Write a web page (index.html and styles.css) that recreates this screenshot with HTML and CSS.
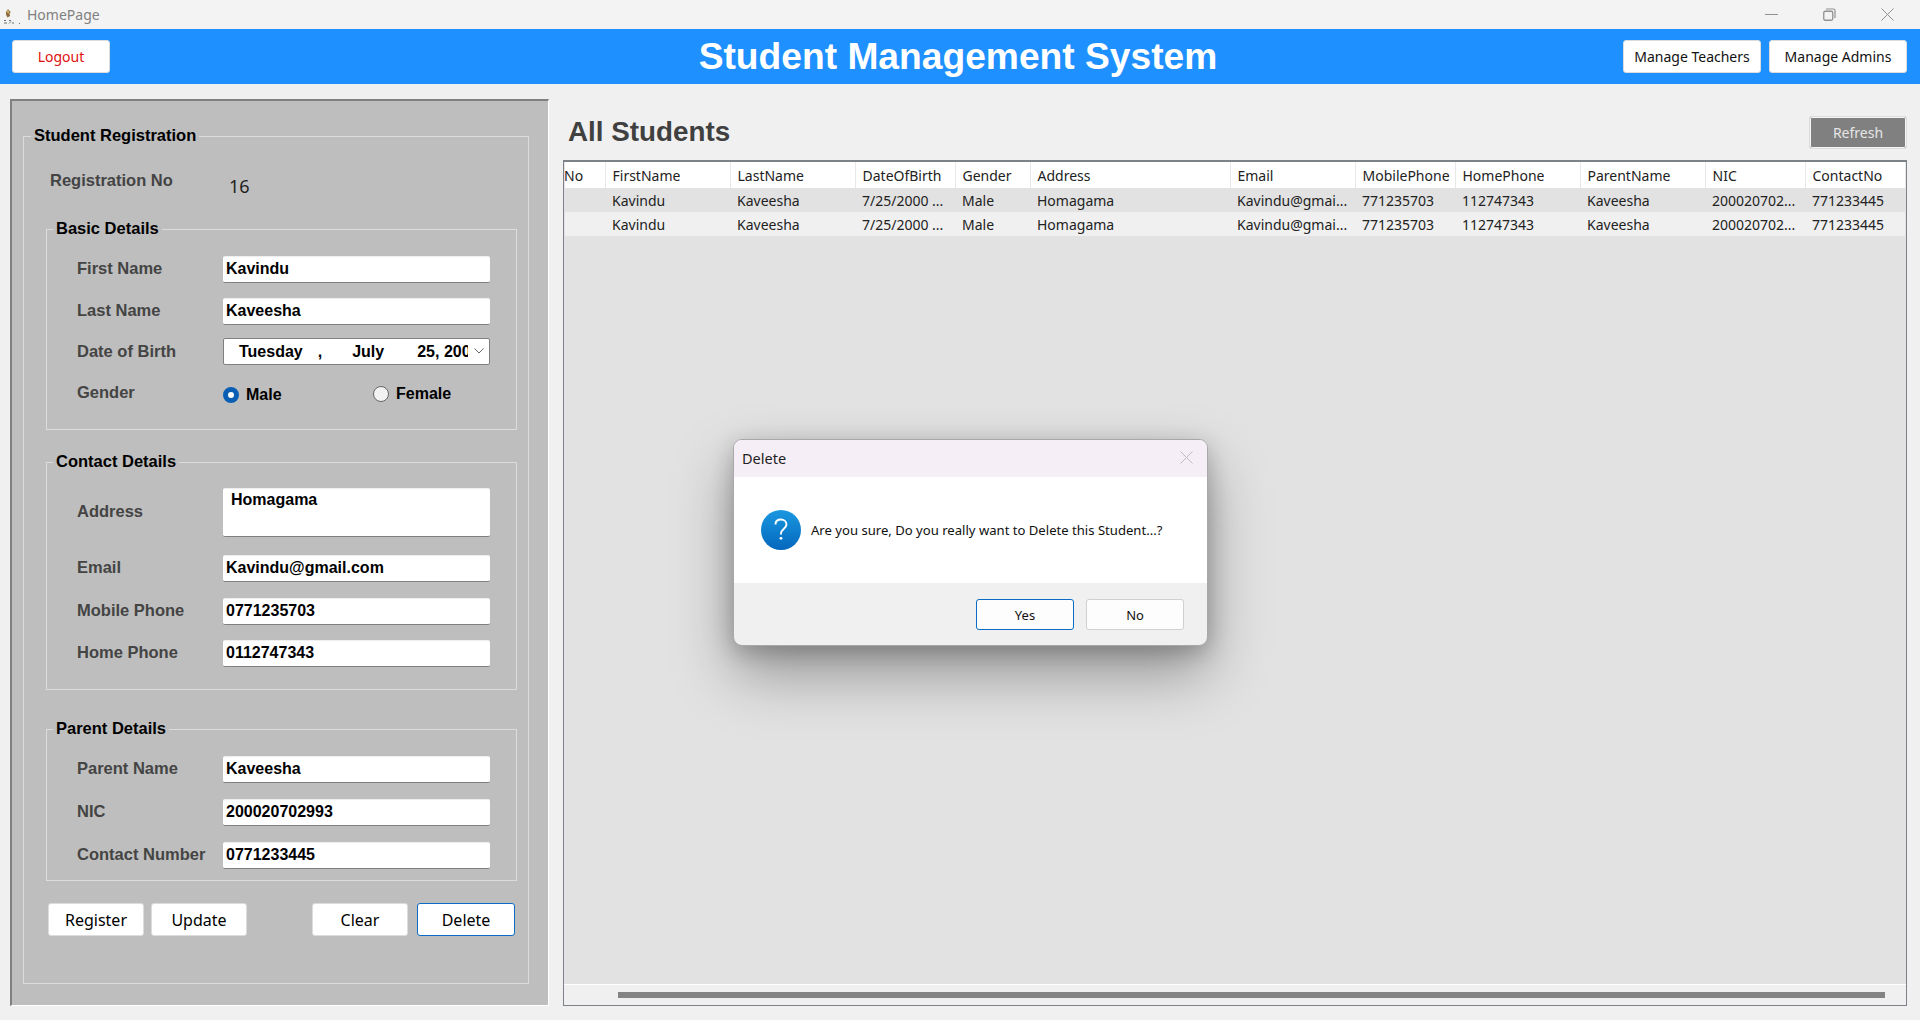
FILE: index.html
```html
<!DOCTYPE html>
<html lang="en">
<head>
    <meta charset="UTF-8">
    <meta name="viewport" content="width=device-width, initial-scale=1.0">
    <title>HomePage</title>
    <link rel="stylesheet" href="styles.css">
</head>
<body>

    <div class="titlebar">
        <svg class="app-icon" width="20" height="20" viewBox="0 0 20 20">
            <path d="M5 7l2-3 1.500 2 1.500 1-1.500 1 .5 3-2.500 1.500-1.500-3z" fill="#8a6a3a"/>
            <path d="M6 6l1-1 1 2-1 2z" fill="#e8c878"/>
            <path d="M3 15.500h2M3 18h3M8 15.500h2M8 18.500l2-2M11 18h2M18 18.500h1" stroke="#6f6f6f" stroke-width="1"/>
        </svg>
        <span class="app-name">HomePage</span>
        <div class="win-controls">
            <svg width="13" height="13" viewBox="0 0 13 13"><path d="M0 6.500h13" stroke="#919191"/></svg>
            <svg width="13" height="13" viewBox="0 0 13 13"><rect x="0.750" y="3.250" width="9" height="9" rx="1.500" fill="none" stroke="#919191" stroke-width="1.300"/><path d="M3 1h7.500a1.500 1.500 0 0 1 1.500 1.500V10" fill="none" stroke="#919191" stroke-width="1.200"/></svg>
            <svg width="13" height="13" viewBox="0 0 13 13"><path d="M0.500 0.500l12 12M12.500 0.500l-12 12" stroke="#919191"/></svg>
        </div>
    </div>

    <header class="topbar">
        <div class="topbar-left"><button class="top-btn logout" type="button">Logout</button></div>
        <h1 class="app-title">Student Management System</h1>
        <div class="topbar-right">
            <button class="top-btn" type="button">Manage Teachers</button>
            <button class="top-btn" type="button">Manage Admins</button>
        </div>
    </header>

    <main class="content">
        <section class="left-panel">
            <fieldset class="group outer">
                <legend>Student Registration</legend>

                <div class="reg-row">
                    <span class="field-label">Registration No</span>
                    <span class="reg-value">16</span>
                </div>

                <fieldset class="group basic">
                    <legend>Basic Details</legend>
                    <div class="row"><label class="field-label">First Name</label><div class="input">Kavindu</div></div>
                    <div class="row"><label class="field-label">Last Name</label><div class="input">Kaveesha</div></div>
                    <div class="row date-row">
                        <label class="field-label">Date of Birth</label>
                        <div class="input date">
                            <span class="date-day">Tuesday</span>
                            <span class="date-comma">,</span>
                            <span class="date-month">July</span>
                            <span class="date-year">25, 2000</span>
                            <svg class="chevron" width="10" height="6" viewBox="0 0 10 6"><path d="M0.500 0.500L5 5l4.500-4.500" fill="none" stroke="#666"/></svg>
                        </div>
                    </div>
                    <div class="row">
                        <label class="field-label">Gender</label>
                        <div class="radio-group">
                            <span class="radio-item male"><span class="radio checked"></span>Male</span>
                            <span class="radio-item"><span class="radio"></span>Female</span>
                        </div>
                    </div>
                </fieldset>

                <fieldset class="group contact">
                    <legend>Contact Details</legend>
                    <div class="row address-row"><label class="field-label">Address</label><div class="input textarea">Homagama</div></div>
                    <div class="row"><label class="field-label">Email</label><div class="input">Kavindu@gmail.com</div></div>
                    <div class="row"><label class="field-label">Mobile Phone</label><div class="input">0771235703</div></div>
                    <div class="row"><label class="field-label">Home Phone</label><div class="input">0112747343</div></div>
                </fieldset>

                <fieldset class="group parent">
                    <legend>Parent Details</legend>
                    <div class="row"><label class="field-label">Parent Name</label><div class="input">Kaveesha</div></div>
                    <div class="row"><label class="field-label">NIC</label><div class="input">200020702993</div></div>
                    <div class="row"><label class="field-label">Contact Number</label><div class="input">0771233445</div></div>
                </fieldset>

                <div class="form-buttons">
                    <button class="form-btn" type="button">Register</button>
                    <button class="form-btn" type="button">Update</button>
                    <button class="form-btn clear" type="button">Clear</button>
                    <button class="form-btn focused" type="button">Delete</button>
                </div>
            </fieldset>
        </section>

        <section class="right-panel">
            <div class="right-head">
                <h2>All Students</h2>
                <button class="refresh" type="button">Refresh</button>
            </div>
            <div class="grid-wrap">
                <div class="grid-body">
                    <table class="grid">
                        <colgroup>
                            <col class="w40"><col class="w125"><col class="w125"><col class="w100"><col class="w75"><col class="w200">
                            <col class="w125"><col class="w100"><col class="w125"><col class="w125"><col class="w100"><col class="w100">
                        </colgroup>
                        <thead>
                            <tr>
                                <th class="no-col">No</th><th>FirstName</th><th>LastName</th><th>DateOfBirth</th><th>Gender</th><th>Address</th>
                                <th>Email</th><th>MobilePhone</th><th>HomePhone</th><th>ParentName</th><th>NIC</th><th>ContactNo</th>
                            </tr>
                        </thead>
                        <tbody>
                            <tr class="odd">
                                <td></td><td>Kavindu</td><td>Kaveesha</td><td>7/25/2000 ...</td><td>Male</td><td>Homagama</td>
                                <td>Kavindu@gmai...</td><td>771235703</td><td>112747343</td><td>Kaveesha</td><td>200020702...</td><td>771233445</td>
                            </tr>
                            <tr>
                                <td></td><td>Kavindu</td><td>Kaveesha</td><td>7/25/2000 ...</td><td>Male</td><td>Homagama</td>
                                <td>Kavindu@gmai...</td><td>771235703</td><td>112747343</td><td>Kaveesha</td><td>200020702...</td><td>771233445</td>
                            </tr>
                        </tbody>
                    </table>
                </div>
                <div class="hscroll"><div class="hscroll-thumb"></div></div>
            </div>
        </section>
    </main>

    <div class="dialog">
        <div class="dialog-title">
            <span>Delete</span>
            <svg width="13" height="13" viewBox="0 0 13 13"><path d="M0.500 0.500l12 12M12.500 0.500l-12 12" stroke="#bdbdbd"/></svg>
        </div>
        <div class="dialog-body">
            <svg class="question" width="40" height="40" viewBox="0 0 40 40">
                <defs>
                    <linearGradient id="qBlue" x1="0" y1="0" x2="0" y2="1">
                        <stop offset="0" stop-color="#1a98e0"/>
                        <stop offset="1" stop-color="#0467bd"/>
                    </linearGradient>
                </defs>
                <circle cx="20" cy="20" r="20" fill="url(#qBlue)"/>
                <path d="M14.500 14.500c0-3.500 2.500-5 5.500-5s5.500 2 5.500 5c0 4-5.500 4.500-5.500 9v1" fill="none" stroke="#fff" stroke-width="1.900"/>
                <circle cx="20" cy="28.300" r="1.400" fill="#fff"/>
            </svg>
            <span class="dialog-msg">Are you sure, Do you really want to Delete this Student...?</span>
        </div>
        <div class="dialog-footer">
            <button class="dlg-btn default" type="button">Yes</button>
            <button class="dlg-btn" type="button">No</button>
        </div>
    </div>

</body>
</html>
```

FILE: styles.css
```css
* {
    box-sizing: border-box;
}

body {
    margin: 0;
    width: 1920px;
    height: 1020px;
    overflow: hidden;
    background-color: #f0f0f0;
    font-family: 'Liberation Sans', Arial, sans-serif;
    color: #000;
}

button {
    font-family: 'Noto Sans', sans-serif;
    cursor: pointer;
}

/* window title bar */
.titlebar {
    height: 29px;
    background-color: #f3f3f3;
    display: flex;
    align-items: center;
    padding-left: 1px;
}

.app-icon {
    margin-right: 6px;
}

.app-name {
    font-family: 'Noto Sans', sans-serif;
    font-size: 14px;
    color: #808080;
}

.win-controls {
    margin-left: auto;
    display: flex;
    gap: 45px;
    padding-right: 26px;
}

/* blue header */
.topbar {
    height: 55px;
    background-color: #1e90ff;
    display: grid;
    grid-template-columns: 1fr auto 1fr;
    align-items: center;
    padding: 0 13px 0 12px;
}

.app-title {
    margin: 0 3px 0 0;
    font-size: 37.200px;
    font-weight: bold;
    color: #fff;
}

.topbar-right {
    display: flex;
    justify-content: flex-end;
    gap: 8px;
}

.top-btn {
    width: 138px;
    height: 33px;
    padding: 0 0 1px 0;
    background-color: #fff;
    border: 1px solid #dcdcdc;
    border-radius: 3px;
    font-size: 14px;
    color: #111;
}

.logout {
    width: 98px;
    color: #e01010;
}

/* page content */
.content {
    display: flex;
    height: 936px;
    padding: 15px 13px 14px 10px;
    gap: 14px;
}

.left-panel {
    width: 539px;
    background-color: #bebebe;
    border-top: 2px solid #808080;
    border-left: 2px solid #808080;
    border-right: 1px solid #fff;
    border-bottom: 1px solid #fff;
    padding: 24px 19px 19px 11px;
}

.group {
    margin: 0;
    padding: 0;
    border: 1px solid #dcdcdc;
    min-width: 0;
}

/* bottom padding lifts the text a little above the fieldset line */
.group legend {
    margin-left: 6px;
    padding: 0 3px 3px 3px;
    font-size: 16.500px;
    font-weight: bold;
    line-height: 20px;
    color: #000;
}

.outer {
    height: 859px;
}

.outer > legend {
    margin-left: 7px;
}

.reg-row {
    display: flex;
    align-items: flex-start;
    height: 70px;
    padding: 23px 0 0 26px;
}

.field-label {
    font-size: 16.500px;
    font-weight: bold;
    color: #444;
}

.reg-row .field-label {
    width: 179px;
    flex: none;
}

.reg-value {
    margin-top: 3px;
    font-family: 'Noto Sans', sans-serif;
    font-size: 18px;
    color: #222;
}

.basic, .contact, .parent {
    width: 471px;
    margin-left: 22px;
    padding-top: 14px;
}

.basic {
    height: 212px;
    padding-top: 15px;
}

.contact {
    height: 239px;
    margin-top: 21px;
}

.parent {
    height: 163px;
    margin-top: 28px;
    padding-top: 15px;
}

.row {
    display: flex;
    align-items: center;
    height: 27px;
    margin: 0 0 15px 30px;
}

.contact .row {
    margin-bottom: 15.500px;
}

.parent .row {
    margin-bottom: 16px;
}

.row .field-label {
    width: 146px;
    flex: none;
    margin-bottom: 2px;
}

.input {
    width: 267px;
    height: 27px;
    background-color: #fff;
    border-top: 1px solid #eee;
    border-bottom: 1px solid #808080;
    border-radius: 2px;
    padding-left: 3px;
    font-size: 16px;
    font-weight: bold;
    line-height: 23px;
    white-space: nowrap;
    overflow: hidden;
}

.date-row {
    margin-top: -2px;
}

.date-row .field-label {
    margin-bottom: 0;
}

.date {
    display: flex;
    border: 1px solid #808080;
    padding-left: 15px;
    line-height: 25px;
    position: relative;
}

.date-comma {
    margin-left: 15px;
}

.date-month {
    margin-left: 30px;
}

.date-year {
    margin-left: 33px;
    width: 51px;
    overflow: hidden;
}

.chevron {
    position: absolute;
    top: 9px;
    right: 5px;
}

.radio-group {
    display: flex;
    font-size: 16px;
    font-weight: bold;
}

.radio-item {
    display: flex;
    align-items: center;
    gap: 7px;
}

.male {
    width: 150px;
    padding-top: 2px;
}

.radio {
    width: 16px;
    height: 16px;
    border: 1px solid #666;
    border-radius: 50%;
    background-color: #f2f2f2;
}

.radio.checked {
    border: 5px solid #0a5fb4;
    background-color: #fff;
}

.contact .address-row {
    height: 49px;
    margin-bottom: 18px;
}

.textarea {
    height: 49px;
    padding: 0 0 0 8px;
    line-height: 22px;
}

.form-buttons {
    display: flex;
    padding-left: 24px;
    margin-top: 22px;
    gap: 7px;
}

.form-btn {
    width: 96px;
    height: 33px;
    padding: 0;
    background-color: #fff;
    border: 1px solid #dcdcdc;
    border-radius: 3px;
    font-size: 16px;
    color: #000;
}

.clear {
    margin-left: 58px;
    margin-right: 2px;
}

.focused {
    width: 98px;
    border: 1px solid #0a6cc4;
}

/* students grid */
.right-panel {
    flex: 1;
    display: flex;
    flex-direction: column;
}

.right-head {
    display: flex;
    justify-content: space-between;
    align-items: flex-start;
    height: 61px;
    padding: 17px 0 0 5px;
}

.right-head h2 {
    margin: 0;
    font-size: 27.800px;
    line-height: 32px;
    color: #404040;
}

.refresh {
    width: 98px;
    height: 33px;
    background-color: #808080;
    border: 1px solid #dcdcdc;
    box-shadow: inset 0 0 0 1px #f5f5f5;
    border-radius: 3px;
    font-size: 14px;
    color: #e6e6e6;
    padding: 0 0 1px 0;
}

.grid-wrap {
    flex: 1;
    display: flex;
    flex-direction: column;
    background-color: #e2e2e2;
    border-top: 2px solid #7d8288;
    border-left: 1px solid #7d8288;
    border-right: 1px solid #7d8288;
    border-bottom: 1px solid #7d8288;
}

.grid-body {
    flex: 1;
    padding-left: 1px;
}

.grid {
    border-collapse: collapse;
    table-layout: fixed;
    width: 1340px;
    font-family: 'Noto Sans', sans-serif;
    font-size: 14px;
    color: #222;
}

.w40 { width: 40px; }
.w75 { width: 75px; }
.w100 { width: 100px; }
.w125 { width: 125px; }
.w200 { width: 200px; }

.grid th {
    height: 26px;
    padding: 0 0 0 7px;
    background-color: #fff;
    border-right: 1px solid #e8e8e8;
    text-align: left;
    font-weight: normal;
    white-space: nowrap;
    overflow: hidden;
}

.grid th.no-col {
    padding-left: 0;
    text-indent: -1px;
}

.grid td {
    height: 24px;
    padding: 0 0 0 7px;
    background-color: #f0f0f0;
    white-space: nowrap;
    overflow: hidden;
}

.grid .odd td {
    background-color: #e2e2e2;
}

.hscroll {
    height: 21px;
    background-color: #f0f0f0;
    border-top: 1px solid #fff;
    padding: 7px 21px 0 54px;
}

.hscroll-thumb {
    height: 6px;
    background-color: #848484;
}

/* message box */
.dialog {
    position: absolute;
    left: 733px;
    top: 439px;
    width: 475px;
    height: 207px;
    display: flex;
    flex-direction: column;
    background-color: #f0f0f0;
    border: 1px solid #a8a8a8;
    border-radius: 9px;
    overflow: hidden;
    box-shadow: 0 28px 60px rgba(0, 0, 0, 0.34), 0 6px 22px rgba(0, 0, 0, 0.22);
}

.dialog-title {
    height: 37px;
    background-color: #f6eef7;
    display: flex;
    align-items: center;
    justify-content: space-between;
    padding: 0 14px 2px 8px;
    font-family: 'Noto Sans', sans-serif;
    font-size: 14.500px;
    color: #222;
}

.dialog-body {
    height: 106px;
    background-color: #fff;
    display: flex;
    align-items: center;
    gap: 10px;
    padding: 0 0 0 27px;
}

.dialog-msg {
    font-family: 'Noto Sans', sans-serif;
    font-size: 13.100px;
    color: #111;
}

.dialog-footer {
    flex: 1;
    display: flex;
    justify-content: flex-end;
    align-items: flex-start;
    gap: 12px;
    padding: 16px 23px 0 0;
}

.dlg-btn {
    width: 98px;
    height: 31px;
    padding: 0;
    background-color: #fdfdfd;
    border: 1px solid #d0d0d0;
    border-radius: 3px;
    font-size: 13px;
    color: #111;
}

.dlg-btn.default {
    border-color: #0a6cc4;
}
```
